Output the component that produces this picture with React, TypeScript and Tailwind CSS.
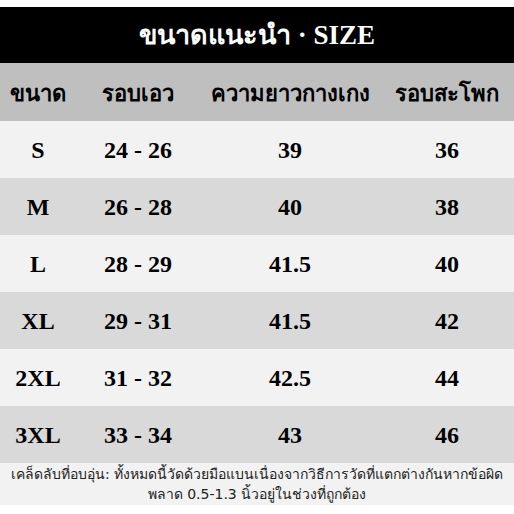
const rows = [
  { size: "S", waist: "24 - 26", length: "39", hip: "36" },
  { size: "M", waist: "26 - 28", length: "40", hip: "38" },
  { size: "L", waist: "28 - 29", length: "41.5", hip: "40" },
  { size: "XL", waist: "29 - 31", length: "41.5", hip: "42" },
  { size: "2XL", waist: "31 - 32", length: "42.5", hip: "44" },
  { size: "3XL", waist: "33 - 34", length: "43", hip: "46" },
];

const cols = "grid grid-cols-[76px_124px_180px_1fr] items-center";

export default function App() {
  return (
    <div className="w-[514px] h-[514px] bg-white pt-[7px] font-['Liberation_Serif',serif] text-black">
      {/* Title */}
      <div className="h-[56px] bg-black flex items-center justify-center">
        <h1 className="text-white text-[27px] font-bold leading-none font-['Liberation_Serif','Noto_Sans',serif]">
          ขนาดแนะนำ · SIZE
        </h1>
      </div>

      {/* Column headers */}
      <div className={`${cols} h-[58px] bg-[#bfbfbf] text-[22px] font-bold font-['Noto_Sans','DejaVu_Sans',sans-serif]`}>
        <div className="text-center">ขนาด</div>
        <div className="text-center">รอบเอว</div>
        <div className="text-center whitespace-nowrap">ความยาวกางเกง</div>
        <div className="text-center whitespace-nowrap">รอบสะโพก</div>
      </div>

      {/* Rows */}
      {rows.map((r, i) => (
        <div
          key={r.size}
          className={`${cols} h-[57px] text-[24px] font-bold ${i % 2 === 0 ? "bg-[#f2f2f2]" : "bg-[#d9d9d9]"}`}
        >
          <div className="text-center">{r.size}</div>
          <div className="text-center">{r.waist}</div>
          <div className="text-center">{r.length}</div>
          <div className="text-center">{r.hip}</div>
        </div>
      ))}

      {/* Note */}
      <div className="h-[42px] bg-[#f2f2f2] flex items-center justify-center text-center text-[14px] leading-[20px] text-[#222] font-['DejaVu_Sans','Noto_Sans',sans-serif]">
        <p className="whitespace-nowrap">
          เคล็ดลับที่อบอุ่น: ทั้งหมดนี้วัดด้วยมือแบนเนื่องจากวิธีการวัดที่แตกต่างกันหากข้อผิด
          <br />
          พลาด 0.5-1.3 นิ้วอยู่ในช่วงที่ถูกต้อง
        </p>
      </div>
    </div>
  );
}
